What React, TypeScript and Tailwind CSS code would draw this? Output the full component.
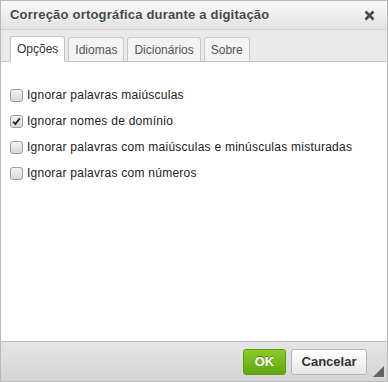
import { useState } from 'react';

const options = [
  { id: 'upper', label: 'Ignorar palavras maiúsculas', checked: false },
  { id: 'domain', label: 'Ignorar nomes de domínio', checked: true },
  { id: 'mixed', label: 'Ignorar palavras com maiúsculas e minúsculas misturadas', checked: false },
  { id: 'numbers', label: 'Ignorar palavras com números', checked: false },
];

const tabs = ['Opções', 'Idiomas', 'Dicionários', 'Sobre'];

function Checkbox({ checked, onChange }: { checked: boolean; onChange: () => void }) {
  return (
    <button
      onClick={onChange}
      className="w-[13px] h-[13px] rounded-[3px] border border-[#9c9c9c] bg-gradient-to-b from-[#f4f4f4] to-[#d8d8d8] flex items-center justify-center shrink-0"
    >
      {checked && (
        <svg width="9" height="9" viewBox="0 0 9 9">
          <path d="M1.2 4.6 L3.4 7 L7.8 1.4" stroke="#222" strokeWidth="1.8" fill="none" />
        </svg>
      )}
    </button>
  );
}

export default function App() {
  const [active, setActive] = useState(0);
  const [values, setValues] = useState(options.map((o) => o.checked));

  return (
    <div
      className="w-[388px] h-[382px] flex flex-col border border-[#b8b8b8] bg-white"
      style={{ fontFamily: '"Liberation Sans", Arial, sans-serif' }}
    >
      {/* Title bar */}
      <div className="h-[29px] shrink-0 flex items-center justify-between pl-[9px] pr-[12px] bg-gradient-to-b from-[#f9f9f9] to-[#e3e3e3] border-b border-[#d2d2d2]">
        <span className="text-[13px] font-bold text-[#474747] [text-shadow:0_1px_0_#fff] tracking-[0.2px]">
          Correção ortográfica durante a digitação
        </span>
        <svg width="11" height="11" viewBox="0 0 11 11">
          <path d="M1.5 1.5 L9.5 9.5 M9.5 1.5 L1.5 9.5" stroke="#4a4a4a" strokeWidth="2.6" />
        </svg>
      </div>

      {/* Tabs */}
      <div className="h-[32px] shrink-0 flex items-end gap-[3px] pl-[9px] bg-[#e9e9e9] border-b border-[#c4c4c4]">
        {tabs.map((t, i) => (
          <button
            key={t}
            onClick={() => setActive(i)}
            className={
              i === active
                ? 'h-[26px] px-[6px] -mb-px text-[12px] text-[#333] bg-white border border-[#c4c4c4] border-b-white rounded-t-[3px]'
                : 'h-[24px] px-[6px] text-[12px] text-[#555] bg-[#f3f3f3] border border-b-0 border-[#c9c9c9] rounded-t-[3px]'
            }
          >
            {t}
          </button>
        ))}
      </div>

      {/* Content */}
      <div className="flex-1 flex flex-col pt-[26px] pl-[9px] gap-[12px]">
        {options.map((o, i) => (
          <label key={o.id} className="flex items-center gap-[4px] h-[14px] text-[12px] text-[#222] tracking-[0.25px]">
            <Checkbox
              checked={values[i]}
              onChange={() => setValues(values.map((v, j) => (j === i ? !v : v)))}
            />
            <span>{o.label}</span>
          </label>
        ))}
      </div>

      {/* Footer */}
      <div className="relative h-[40px] shrink-0 flex items-center justify-end gap-[5px] pr-[20px] bg-gradient-to-b from-[#e6e6e6] to-[#d3d3d3] border-t border-[#bcbcbc]">
        <button className="h-[26px] w-[43px] rounded-[3px] border border-[#5b9d0a] bg-gradient-to-b from-[#8ccb2a] to-[#60a60e] text-white text-[13px] font-bold [text-shadow:0_-1px_0_#4b8a08]">
          OK
        </button>
        <button className="h-[26px] w-[76px] rounded-[3px] border border-[#b6b6b6] bg-gradient-to-b from-[#ffffff] to-[#e6e6e6] text-[#333] text-[13px] font-bold">
          Cancelar
        </button>
        <svg className="absolute right-[3px] bottom-[4px]" width="11" height="11" viewBox="0 0 11 11">
          <path d="M11 0 L11 11 L0 11 Z" fill="#626262" />
        </svg>
      </div>
    </div>
  );
}
